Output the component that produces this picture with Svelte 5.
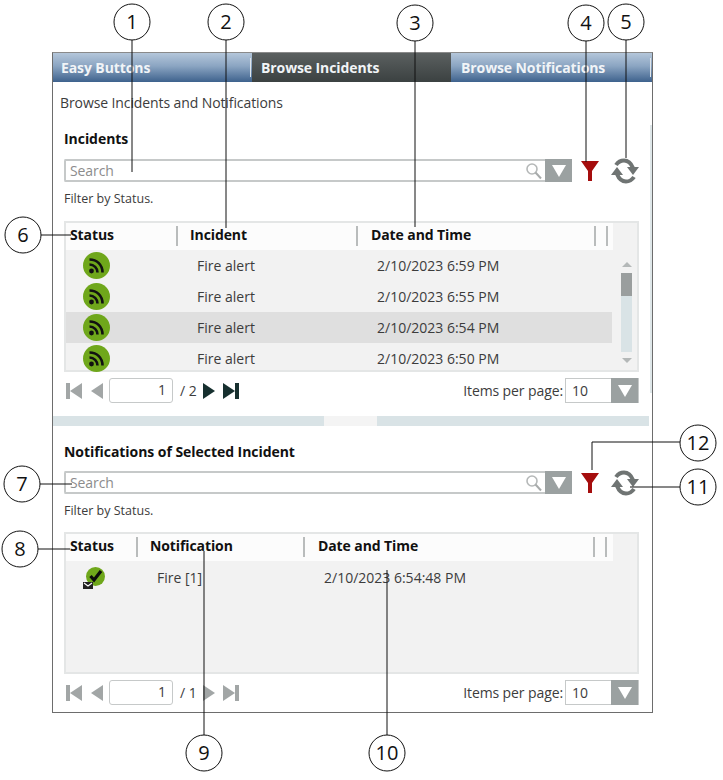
<script>
  const incidents = [
    { name: 'Fire alert', time: '2/10/2023 6:59 PM' },
    { name: 'Fire alert', time: '2/10/2023 6:55 PM' },
    { name: 'Fire alert', time: '2/10/2023 6:54 PM', selected: true },
    { name: 'Fire alert', time: '2/10/2023 6:50 PM' }
  ];

  // numbered callouts drawn over the screenshot
  const callouts = [
    { n: 1, x: 132, y: 22, line: 'M132 40V172' },
    { n: 2, x: 226, y: 22, line: 'M226 40V228' },
    { n: 3, x: 415, y: 23, line: 'M415 41V227' },
    { n: 4, x: 586, y: 23, line: 'M586 41V162' },
    { n: 5, x: 626, y: 22, line: 'M626 40V158' },
    { n: 6, x: 23, y: 235, line: 'M41 235H71' },
    { n: 7, x: 22, y: 484, line: 'M40 484H72' },
    { n: 8, x: 20, y: 549, line: 'M38 549H70' },
    { n: 9, x: 204, y: 753, line: 'M204 735V551' },
    { n: 10, x: 387, y: 753, line: 'M387 735V570' },
    { n: 11, x: 698, y: 487, line: 'M680 487H630' },
    { n: 12, x: 698, y: 443, line: 'M680 442H592V470' }
  ];
</script>

{#snippet toolbar()}
  <div class="toolbar">
    <div class="search">
      <span class="placeholder">Search</span>
      <svg class="glass" width="18" height="18" viewBox="0 0 18 18">
        <circle cx="7" cy="7" r="5" fill="none" stroke="#b5b8b8" stroke-width="1.6" />
        <path d="M10.5 10.5L16 16.5" stroke="#a8abab" stroke-width="2" />
      </svg>
      <span class="drop"><i></i></span>
    </div>
    <svg class="funnel" width="20" height="22" viewBox="0 0 20 22">
      <path d="M1 1H19L12 11V21H8V11Z" fill="#a50d0d" />
    </svg>
    <svg class="refresh" width="30" height="26" viewBox="0 0 30 26">
      <path d="M6 7C8 4 11 2.500 14 2.500C18 2.500 21 5 23 10" fill="none" stroke="#6f7473" stroke-width="4" />
      <path d="M17 9H29L23 17Z" fill="#6f7473" />
      <path d="M24 19C22 22 19 23.500 16 23.500C12 23.500 9 21 7 16" fill="none" stroke="#6f7473" stroke-width="4" />
      <path d="M13 17H1L7 9Z" fill="#6f7473" />
    </svg>
  </div>
  <p class="hint">Filter by Status.</p>
{/snippet}

{#snippet pager(total, dim)}
  <div class="pager">
    <svg width="37" height="18" viewBox="0 0 37 18" fill="#a2a6a6">
      <rect x="0" y="1" width="4" height="16" />
      <path d="M4 9L16 1V17Z" />
      <path d="M25 9L37 1V17Z" />
    </svg>
    <span class="page">1</span>
    <span class="total">/ {total}</span>
    <svg width="37" height="18" viewBox="0 0 37 18" fill={dim ? '#a2a6a6' : '#17302f'}>
      <path d="M0 1L12 9L0 17Z" />
      <path d="M20 1L32 9L20 17Z" />
      <rect x="32" y="1" width="4" height="16" />
    </svg>
    <span class="per">Items per page:</span>
    <div class="select">
      <span>10</span>
      <span class="drop"><i></i></span>
    </div>
  </div>
{/snippet}

{#snippet rss()}
  <svg width="27" height="27" viewBox="0 0 27 27">
    <circle cx="13.5" cy="13.5" r="13.5" fill="#6fa71b" />
    <circle cx="8.5" cy="19" r="2.4" fill="#111" />
    <path d="M6.5 12.5C11 12.5 14.5 16 14.5 20.5" fill="none" stroke="#111" stroke-width="2.6" />
    <path d="M6.5 7.500C14 7.500 19.5 13 19.5 20.5" fill="none" stroke="#111" stroke-width="2.6" />
  </svg>
{/snippet}

<div class="screen">
  <div class="panel">
    <nav class="tabs">
      <div class="tab first">Easy Buttons</div>
      <div class="tab active">Browse Incidents</div>
      <div class="tab last">Browse Notifications</div>
    </nav>

    <div class="sidebar-strip"></div>

    <section class="top">
      <p class="title">Browse Incidents and Notifications</p>
      <h2>Incidents</h2>
      {@render toolbar()}

      <div class="grid inc">
        <div class="head">
          <span>Status</span><span>Incident</span><span>Date and Time</span><span></span>
        </div>
        <div class="rows">
          {#each incidents as row}
            <div class="row" class:selected={row.selected}>
              <span class="icon">{@render rss()}</span>
              <span>{row.name}</span>
              <span>{row.time}</span>
            </div>
          {/each}
        </div>
        <div class="scrollbar">
          <i class="up"></i>
          <div class="track"><div class="thumb"></div></div>
          <i class="down"></i>
        </div>
      </div>
      {@render pager(2, false)}
    </section>

    <div class="splitter"><i></i><b></b><i></i></div>

    <section class="bottom">
      <h2>Notifications of Selected Incident</h2>
      {@render toolbar()}

      <div class="grid not">
        <div class="head">
          <span>Status</span><span>Notification</span><span>Date and Time</span><span></span>
        </div>
        <div class="rows">
          <div class="row">
            <span class="icon">
              <svg width="26" height="26" viewBox="0 0 26 26">
                <circle cx="12.5" cy="12.500" r="9.5" fill="#6fa71b" />
                <path d="M7.5 12L11 16L18 7" fill="none" stroke="#0c0c0c" stroke-width="3.2" />
                <rect x="0" y="18" width="10" height="7" fill="#222" />
                <path d="M1 19L5 22L9 19" fill="none" stroke="#fff" stroke-width="1.1" />
              </svg>
            </span>
            <span>Fire [1]</span>
            <span>2/10/2023 6:54:48 PM</span>
          </div>
        </div>
      </div>
      {@render pager(1, true)}
    </section>
  </div>

  <svg class="callouts" width="723" height="780" viewBox="0 0 723 780">
    {#each callouts as c}
      <path d={c.line} fill="none" stroke="#111" stroke-width="1" />
      <circle cx={c.x} cy={c.y} r="18" fill="#fff" stroke="#111" stroke-width="1" />
      <text x={c.x} y={c.y + 7}>{c.n}</text>
    {/each}
  </svg>
</div>

<style>
  :global(body) { margin: 0; background: #fff; }

  .screen {
    position: relative;
    width: 723px;
    height: 780px;
    padding: 52px 0 0 52px;
    box-sizing: border-box;
    overflow: hidden;
    font-family: "Open Sans", "Noto Sans", sans-serif;
    font-size: 14px;
    color: #3c3c3c;
  }

  .panel {
    position: relative;
    width: 601px;
    height: 661px;
    box-sizing: border-box;
    border: 1px solid #6d6d6d;
    border-top-color: #8a8a8a;
  }

  .tabs { display: flex; height: 29px; }
  .tab {
    position: relative;
    display: flex; align-items: center;
    box-sizing: border-box;
    padding-left: 8px;
    font-size: 14px; font-weight: 700; letter-spacing: -0.1px;
    color: #f1f4f7;
    background: linear-gradient(#b4c6da, #8ba5c2 45%, #3e628d);
  }
  .tab.first { width: 199px; }
  .tab.first::after, .tab.last::after {
    content: '';
    position: absolute; top: 5px; right: 1px;
    width: 1px; height: 19px;
    background: #dfe5ea;
  }
  .tab.active {
    width: 199px; padding-left: 9px;
    background: linear-gradient(#5b6060, #3b4141);
  }
  .tab.last { flex: 1; padding-left: 10px; }

  .sidebar-strip {
    position: absolute; right: 0; top: 72px;
    width: 2px; height: 268px;
    background: #dfe7e9;
  }

  section { padding: 0 12px 0 11px; }
  .title { margin: 0 0 0 -4px; padding-top: 11px; line-height: 20px; letter-spacing: -0.1px; }
  h2 {
    margin: 0; padding-top: 16px; line-height: 20px;
    font-size: 14px; font-weight: 700; letter-spacing: -0.05px;
    color: #111;
  }

  .toolbar { display: flex; align-items: center; margin-top: 10px; height: 23px; }
  .bottom .toolbar { margin-top: 9px; }
  .search {
    display: flex; align-items: center;
    width: 508px; height: 23px;
    box-sizing: border-box;
    border: 2px solid #c6c9c9; border-right: none; border-radius: 2px;
    padding-left: 4px;
  }
  .placeholder { flex: 1; color: #8c8c8c; letter-spacing: -0.1px; }
  .glass { margin-right: 2px; }
  .drop {
    display: flex; align-items: center; justify-content: center;
    width: 27px; height: 23px; margin: -2px 0;
    background: #9ba1a1;
  }
  .drop i {
    width: 0; height: 0;
    border: 7px solid transparent; border-bottom: none;
    border-top: 12px solid #fff;
  }
  .funnel { margin-left: 8px; }
  .refresh { margin-left: 10px; }

  .hint { margin: 8px 0 0; line-height: 18px; font-size: 12.5px; }

  .grid {
    position: relative;
    width: 575px;
    box-sizing: border-box;
    margin-top: 12px;
    border: 2px solid #e4e6e6;
    background: #f2f2f2;
  }
  .top .grid { margin-top: 13px; }
  .grid.inc { height: 151px; }
  .grid.not { height: 142px; }

  .head {
    display: grid;
    width: 547px; height: 24px;
    padding-top: 3px;
    align-items: start;
    background: #fcfcfc;
    font-weight: 700; color: #111; letter-spacing: -0.1px;
  }
  .head span {
    height: 20px; line-height: 18px;
    padding-left: 13px;
    border-left: 2px solid #b9bcbc;
    margin-left: -1px;
  }
  .head span:first-child { padding-left: 4px; border-left: none; margin-left: 0; }
  .head span:nth-child(2) { padding-left: 12px; }
  .head span:last-child { width: 14px; padding: 0; border-right: 2px solid #b9bcbc; box-sizing: border-box; }

  .inc .head, .inc .row { grid-template-columns: 111px 180px 238px 15px; }
  .not .head, .not .row { grid-template-columns: 71px 167px 290px 16px; }

  .rows { width: 546px; }
  .inc .rows { height: 122px; overflow: hidden; }
  .row {
    display: grid;
    height: 31px;
    align-items: center;
  }
  .not .row { height: 32px; }
  .row.selected { background: #dfdfdf; }
  .row span { padding-left: 20px; }
  .row .icon { display: flex; padding-left: 17px; }

  .scrollbar {
    position: absolute;
    right: 5px; top: 39px;
    display: flex; flex-direction: column; align-items: center;
    width: 11px;
  }
  .scrollbar i { width: 0; height: 0; border: 5px solid transparent; }
  .scrollbar .up { border-top: none; border-bottom: 5px solid #b4b8b8; }
  .scrollbar .down { border-bottom: none; border-top: 5px solid #b4b8b8; }
  .track { width: 11px; height: 79px; margin: 6px 0; background: #d9e3e6; }
  .thumb { height: 23px; background: #9a9e9e; }

  .pager {
    display: flex; align-items: center;
    width: 575px; height: 25px;
    box-sizing: border-box;
    margin-top: 6px; padding-left: 2px;
  }
  .page {
    width: 64px; height: 25px;
    box-sizing: border-box;
    margin-left: 6px; padding-right: 6px;
    border: 1.5px solid #c6c9c9; border-radius: 3px;
    line-height: 22px; text-align: right;
  }
  .total { margin: 0 6px 0 7px; }
  .per { margin-left: auto; margin-right: 2px; letter-spacing: -0.1px; }
  .select {
    display: flex; align-items: center;
    width: 74px; height: 25px;
    box-sizing: border-box;
    border: 1.5px solid #c6c9c9;
    padding-left: 6px;
  }
  .select span:first-child { flex: 1; }
  .select .drop { width: 27px; height: 25px; }

  .splitter { display: flex; height: 10px; margin-top: 13px; }
  .splitter i { background: #d9e3e6; width: 271px; }
  .splitter i:last-child { width: 272px; }
  .splitter b { width: 53px; background: #f4f4f4; }

  .callouts { position: absolute; left: 0; top: 0; }
  .callouts text {
    font-family: "Open Sans", sans-serif;
    font-size: 20px;
    text-anchor: middle;
    fill: #111;
  }
</style>
